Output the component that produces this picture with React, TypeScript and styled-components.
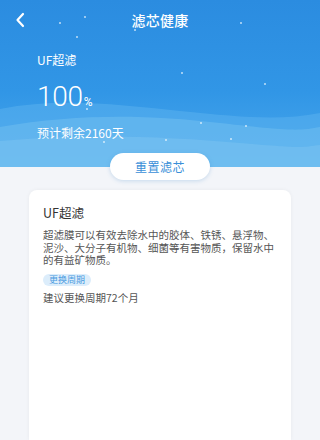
import React from "react";
import styled, { createGlobalStyle } from "styled-components";

const Global = createGlobalStyle`
  html, body { margin: 0; padding: 0; }
  body {
    width: 320px; height: 440px; overflow: hidden;
    background: #f3f5f9;
    font-family: "Noto Sans CJK SC", "Noto Sans", sans-serif;
  }
`;

const Page = styled.div`
  display: flex;
  flex-direction: column;
  width: 320px;
  height: 440px;
  overflow: hidden;
  background: #f3f5f9;
`;

const Header = styled.header`
  position: relative;
  height: 167px;
  background: linear-gradient(180deg, #2b8ce0 0%, #3196e6 55%, #4aa8ec 100%);
  overflow: hidden;
  display: flex;
  flex-direction: column;
`;

const Waves = styled.svg`
  position: absolute;
  left: 0;
  bottom: 0;
  width: 320px;
  height: 70px;
`;

const Star = styled.span<{ $x: number; $y: number; $s?: number }>`
  position: absolute;
  left: ${(p) => p.$x}px;
  top: ${(p) => p.$y}px;
  width: ${(p) => p.$s ?? 2}px;
  height: ${(p) => p.$s ?? 2}px;
  border-radius: 50%;
  background: rgba(255, 255, 255, 0.7);
`;

const NavBar = styled.div`
  position: relative;
  height: 40px;
  display: flex;
  align-items: center;
  justify-content: center;
`;

const Back = styled.button`
  position: absolute;
  left: 10px;
  top: 9px;
  width: 20px;
  height: 22px;
  padding: 0;
  border: 0;
  background: none;
  display: flex;
  align-items: center;
  justify-content: center;
`;

const Title = styled.h1`
  margin: 0;
  font-size: 14px;
  font-weight: 500;
  color: #ffffff;
  letter-spacing: 0.3px;
`;

const Info = styled.div`
  position: relative;
  display: flex;
  flex-direction: column;
  padding: 11px 0 0 37px;
  color: #ffffff;
`;

const FilterName = styled.div`
  font-size: 12px;
  line-height: 18px;
`;

const Percent = styled.div`
  margin-top: 13px;
  font-family: "Roboto", "Noto Sans", sans-serif;
  font-size: 28px;
  line-height: 30px;
  font-weight: 300;
  letter-spacing: -0.3px;
  span {
    font-size: 12px;
    font-weight: 400;
    margin-left: 1px;
  }
`;

const Remain = styled.div`
  margin-top: 7px;
  font-size: 12px;
  line-height: 18px;
`;

const ResetRow = styled.div`
  position: relative;
  display: flex;
  justify-content: center;
  margin-top: -14px;
`;

const ResetButton = styled.button`
  width: 100px;
  height: 27px;
  border: 0;
  border-radius: 14px;
  background: #ffffff;
  box-shadow: 0 1px 4px rgba(60, 130, 200, 0.25);
  color: #3a8fd8;
  font-family: "Noto Sans CJK SC", sans-serif;
  font-size: 12px;
  letter-spacing: 0.5px;
`;

const Card = styled.section`
  margin: 10px 29px 0;
  flex: 1;
  background: #ffffff;
  border-radius: 8px 8px 0 0;
  box-shadow: 0 0 4px rgba(0, 0, 0, 0.05);
  padding: 13px 13px 0 14px;
  display: flex;
  flex-direction: column;
  align-items: flex-start;
`;

const CardTitle = styled.h2`
  margin: 0;
  font-size: 12.5px;
  font-weight: 400;
  line-height: 20px;
  color: #333333;
`;

const Desc = styled.p`
  margin: 6px 0 0;
  font-size: 10.5px;
  line-height: 12.5px;
  color: #555555;
`;

const Tag = styled.span`
  margin-top: 7px;
  padding: 0 6px;
  height: 12px;
  line-height: 12px;
  border-radius: 6px;
  background: #dcedfb;
  color: #4a9be0;
  font-size: 9px;
`;

const Suggest = styled.div`
  margin-top: 5px;
  font-size: 10.5px;
  line-height: 14px;
  color: #555555;
`;

const stars: [number, number, number?][] = [
  [59, 22], [84, 16], [76, 36], [134, 29], [240, 22], [181, 72], [264, 83],
  [86, 108], [200, 122], [245, 125], [103, 141], [230, 138], [165, 139],
];

export default function App() {
  return (
    <Page>
      <Global />
      <Header>
        <Waves viewBox="0 0 320 70" preserveAspectRatio="none">
          <path
            d="M0 12 C 60 0, 120 8, 180 14 S 280 24, 320 16 L320 70 L0 70 Z"
            fill="#5ab0ee"
            opacity="0.55"
          />
          <path
            d="M0 30 C 80 16, 150 18, 220 26 S 300 34, 320 30 L320 70 L0 70 Z"
            fill="#6cbcf0"
            opacity="0.6"
          />
          <path
            d="M0 44 C 90 36, 170 40, 240 46 S 300 50, 320 48 L320 70 L0 70 Z"
            fill="#7cc4f2"
            opacity="0.5"
          />
        </Waves>
        {stars.map(([x, y, s], i) => (
          <Star key={i} $x={x} $y={y} $s={s} />
        ))}
        <NavBar>
          <Back aria-label="返回">
            <svg width="10" height="16" viewBox="0 0 10 16">
              <path
                d="M8 2 L2.5 8 L8 14"
                fill="none"
                stroke="#ffffff"
                strokeWidth="2.2"
                strokeLinecap="round"
                strokeLinejoin="round"
              />
            </svg>
          </Back>
          <Title>滤芯健康</Title>
        </NavBar>
        <Info>
          <FilterName>UF超滤</FilterName>
          <Percent>
            100<span>%</span>
          </Percent>
          <Remain>预计剩余2160天</Remain>
        </Info>
      </Header>
      <ResetRow>
        <ResetButton>重置滤芯</ResetButton>
      </ResetRow>
      <Card>
        <CardTitle>UF超滤</CardTitle>
        <Desc>
          超滤膜可以有效去除水中的胶体、铁锈、悬浮物、泥沙、大分子有机物、细菌等有害物质，保留水中的有益矿物质。
        </Desc>
        <Tag>更换周期</Tag>
        <Suggest>建议更换周期72个月</Suggest>
      </Card>
    </Page>
  );
}
